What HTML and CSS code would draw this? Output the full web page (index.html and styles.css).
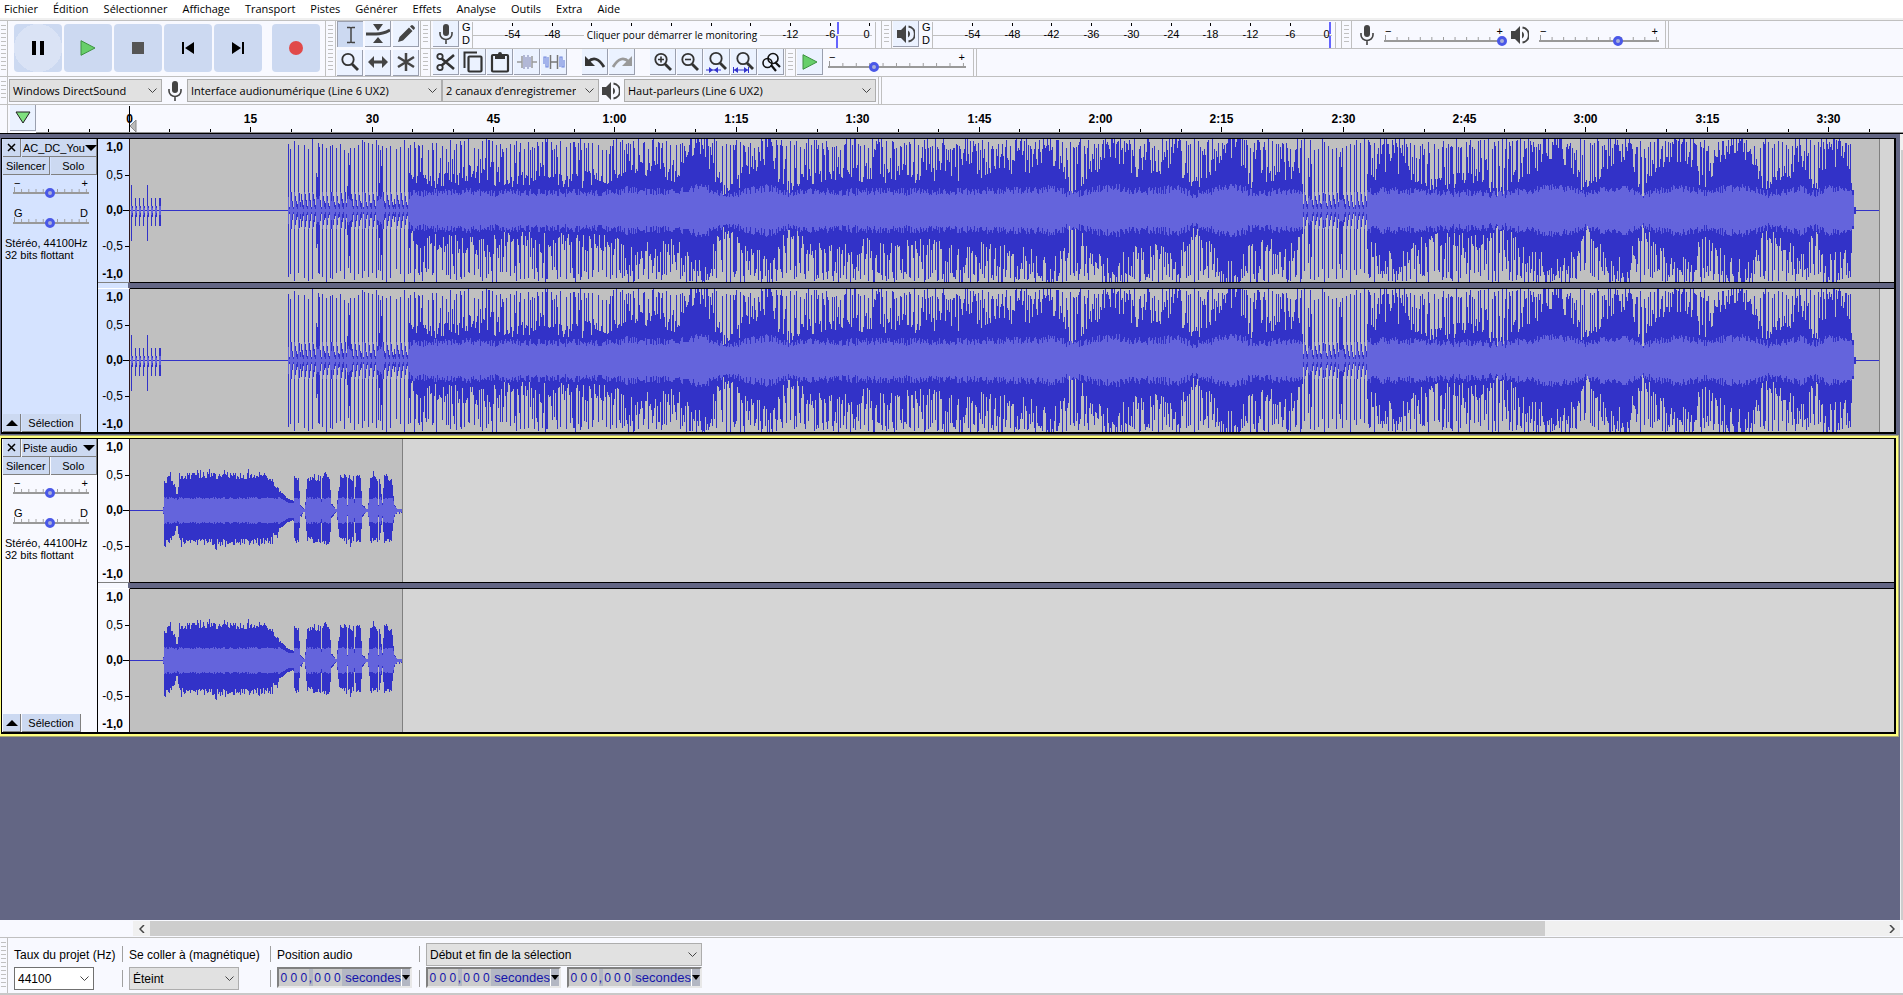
FILE: index.html
```
<!DOCTYPE html>
<html lang="fr">
<head>
  <meta charset="UTF-8" />
  <title>Audacity</title>
  <link rel="stylesheet" href="styles.css">
</head>
<body>

  <svg class="defs" width="0" height="0" aria-hidden="true">
    <symbol id="i-mic" viewBox="0 0 14 20">
      <rect x="4" y="0" width="6" height="12" rx="3" fill="#444"/>
      <path d="M1 8v2a6 5.500 0 0 0 12 0V8M7 15v5" fill="none" stroke="#444" stroke-width="1.600"/>
    </symbol>
    <symbol id="i-speaker" viewBox="0 0 18 18">
      <path d="M0 5h4l5-5v18l-5-5H0z" fill="#444"/>
      <path d="M11 5.500a4 4 0 0 1 0 7z" fill="#444"/>
      <path d="M11.500 1.500a7.600 7.600 0 0 1 0 15" fill="none" stroke="#444" stroke-width="2"/>
    </symbol>
    <symbol id="i-lens" viewBox="0 0 20 20">
      <circle cx="8" cy="7.500" r="5.700" fill="none" stroke="#333" stroke-width="1.800"/>
      <path d="M12 12l6 6" stroke="#333" stroke-width="2.800"/>
    </symbol>
    <symbol id="i-play" viewBox="0 0 16 16">
      <path d="M1 .7L15 8 1 15.300z" fill="#67cf6a" stroke="#3d9140"/>
    </symbol>
  </svg>

  <nav class="menu">
    <a href="#">Fichier</a>
    <a href="#">Édition</a>
    <a href="#">Sélectionner</a>
    <a href="#">Affichage</a>
    <a href="#">Transport</a>
    <a href="#">Pistes</a>
    <a href="#">Générer</a>
    <a href="#">Effets</a>
    <a href="#">Analyse</a>
    <a href="#">Outils</a>
    <a href="#">Extra</a>
    <a href="#">Aide</a>
  </nav>

  <div class="dock">
    <div class="grab first"></div>
    <div class="transport">
      <button class="hover" aria-label="Pause"><svg width="14" height="14"><path d="M1 0h4v14H1zM9 0h4v14H9z"/></svg></button>
      <button aria-label="Lecture"><svg width="16" height="16"><use href="#i-play"/></svg></button>
      <button aria-label="Arrêter"><svg width="14" height="14"><path d="M1 1h12v12H1z" fill="#555"/></svg></button>
      <button aria-label="Début"><svg width="14" height="14"><path d="M1 1h2v12H1zM13 1v12L4 7z"/></svg></button>
      <button aria-label="Fin"><svg width="14" height="14"><path d="M11 1h2v12h-2zM1 1v12l9-6z"/></svg></button>
      <button class="record" aria-label="Enregistrer"><svg width="14" height="14"><circle cx="7" cy="7" r="7" fill="#e14a4a"/></svg></button>
    </div>
    <div class="grab"></div>
    <div class="tools">
      <button class="tb down" aria-label="Outil de sélection"><svg width="20" height="20"><path d="M6 2.500h3q1 0 1 1 0-1 1-1h3M6 17.500h3q1 0 1-1 0 1 1 1h3M10 3v14" fill="none" stroke="#444" stroke-width="1.500"/></svg></button>
      <button class="tb" aria-label="Outil de niveau"><svg width="24" height="20"><path d="M7 0h10l-5 7zM7 19h10l-5-6z" fill="#444"/><path d="M0 10h10q7 0 14-4" fill="none" stroke="#444" stroke-width="3"/></svg></button>
      <button class="tb" aria-label="Outil de retouche"><svg width="20" height="20"><path d="M2 18l1.500-5L13 3.500 16.500 7 7 16.500zM14 2.500l1-1q1-1 2 0L18.500 3q1 1 0 2l-1 1z" fill="#444"/></svg></button>
      <button class="tb" aria-label="Outil de zoom"><svg width="20" height="20"><use href="#i-lens"/></svg></button>
      <button class="tb" aria-label="Outil de glissement"><svg width="20" height="14"><path d="M0 7l6-6v4.500h8V1l6 6-6 6V8.500H6V13z" fill="#444"/></svg></button>
      <button class="tb" aria-label="Multi-outils"><svg width="20" height="20"><path d="M10 1v18M2 5l16 10M18 5L2 15" stroke="#444" stroke-width="2.500"/></svg></button>
    </div>

    <div class="bars">
      <div class="bar">
        <div class="grab"></div>
        <button class="tb" aria-label="Niveau d'enregistrement"><svg width="14" height="20"><use href="#i-mic"/></svg></button>
        <div class="gd"><span>G</span><span>D</span></div>
        <svg class="meter" data-peak="365,364" data-note="Cliquer pour démarrer le monitoring"></svg>
        <div class="grab"></div>
        <button class="tb" aria-label="Niveau de lecture"><svg width="18" height="18"><use href="#i-speaker"/></svg></button>
        <div class="gd"><span>G</span><span>D</span></div>
        <svg class="meter" data-peak="397,397"></svg>
        <div class="grab"></div>
        <div class="mixer">
          <svg width="14" height="20"><use href="#i-mic"/></svg>
          <div class="slider"><div class="ends"><span>−</span><span>+</span></div><input type="range" aria-label="Volume d'enregistrement" min="0" max="100" value="99"></div>
          <svg width="18" height="18"><use href="#i-speaker"/></svg>
          <div class="slider"><div class="ends"><span>−</span><span>+</span></div><input type="range" aria-label="Volume de lecture" min="0" max="100" value="66"></div>
        </div>
        <div class="end"></div>
      </div>

      <div class="bar">
        <div class="grab"></div>
        <div class="group">
          <button class="tb" aria-label="Couper"><svg width="20" height="20"><path d="M5 6l13 11M5 14L18 3" stroke="#333" stroke-width="2.600"/><circle cx="4" cy="4.500" r="2.700" fill="#ebf2ff" stroke="#333" stroke-width="1.800"/><circle cx="4" cy="15.500" r="2.700" fill="#ebf2ff" stroke="#333" stroke-width="1.800"/></svg></button>
          <button class="tb" aria-label="Copier"><svg width="20" height="22"><path d="M1.500 17V1.500H14" fill="none" stroke="#333" stroke-width="2"/><rect x="5.500" y="5.500" width="13" height="15" rx="1" fill="none" stroke="#333" stroke-width="2.200"/></svg></button>
          <button class="tb" aria-label="Coller"><svg width="20" height="22"><rect x="2" y="4" width="16" height="16.500" rx="1" fill="none" stroke="#333" stroke-width="2.200"/><path d="M5 3h3q0-2 2-2t2 2h3v5H5z" fill="#333"/></svg></button>
          <button class="tb" aria-label="Rogner"><svg width="20" height="16"><path d="M0 8h5M15 8h5M5 2v12M15 2v12" stroke="#999" stroke-width="1.500"/><path d="M7 1v14M9 3v10M11 1v14M13 3v10" stroke="#8b90bb" stroke-width="1.200"/></svg></button>
          <button class="tb" aria-label="Silence"><svg width="22" height="16"><path d="M7 8h8M7.500 1v14M14.500 1v14" stroke="#777" stroke-width="1.500"/><path d="M1 10V3h2v10h2V3M17 13V3h2v10h2V6" fill="none" stroke="#7288dd" stroke-width="1.200"/></svg></button>
        </div>
        <div class="group">
          <button class="tb" aria-label="Annuler"><svg width="22" height="14"><path d="M4 7q8-8 16 5" fill="none" stroke="#333" stroke-width="2.800"/><path d="M1 1v10h10z" fill="#333"/></svg></button>
          <button class="tb" aria-label="Refaire"><svg width="22" height="14"><path d="M18 7Q10-1 2 12" fill="none" stroke="#999" stroke-width="2.800"/><path d="M21 1v10H11z" fill="#999"/></svg></button>
        </div>
        <div class="group">
          <button class="tb" aria-label="Zoom avant"><svg width="20" height="20"><use href="#i-lens"/><path d="M5 7.500h6M8 4.500v6" stroke="#333" stroke-width="1.600"/></svg></button>
          <button class="tb" aria-label="Zoom arrière"><svg width="20" height="20"><use href="#i-lens"/><path d="M5 7.500h6" stroke="#333" stroke-width="1.600"/></svg></button>
          <button class="tb" aria-label="Zoom sur la sélection"><svg width="22" height="22"><use href="#i-lens" x="2" y="0" width="20" height="20"/><path d="M0 19h15" stroke="#33c"/><path d="M7 19l-4-3v6zM8 19l4-3v6z" fill="#33c"/></svg></button>
          <button class="tb" aria-label="Ajuster le projet"><svg width="22" height="22"><use href="#i-lens" x="2" y="0" width="20" height="20"/><path d="M1 19h14M.5 16v6M15.500 16v6" stroke="#33c"/><path d="M1 19l4-3v6zM15 19l-4-3v6z" fill="#33c"/></svg></button>
          <button class="tb" aria-label="Basculer le zoom"><svg width="20" height="20"><circle cx="6.500" cy="11" r="4.500" fill="none" stroke="#111" stroke-width="1.600"/><circle cx="12" cy="6.500" r="5" fill="none" stroke="#111" stroke-width="1.600"/><path d="M10 13l5 6M14 10l5 5" stroke="#111" stroke-width="2.200"/></svg></button>
        </div>
        <div class="grab"></div>
        <button class="tb" aria-label="Lecture à vitesse"><svg width="16" height="18"><use href="#i-play"/></svg></button>
        <div class="slider speed"><div class="ends"><span>−</span><span>+</span></div><input type="range" aria-label="Vitesse de lecture" min="0" max="100" value="33"></div>
        <div class="end"></div>
      </div>
    </div>
  </div>

  <div class="devices">
    <div class="grab first"></div>
    <select class="host" aria-label="Hôte audio"><option>Windows DirectSound</option></select>
    <svg width="14" height="20"><use href="#i-mic"/></svg>
    <select class="input" aria-label="Périphérique d'enregistrement"><option>Interface audionumérique (Line 6 UX2)</option></select>
    <select class="channels" aria-label="Canaux"><option>2 canaux d’enregistrement (stéréo)</option></select>
    <svg width="18" height="18"><use href="#i-speaker"/></svg>
    <select class="output" aria-label="Périphérique de lecture"><option>Haut-parleurs (Line 6 UX2)</option></select>
    <div class="end"></div>
  </div>

  <div class="timeline">
    <div class="grab first plain"></div>
    <button class="tb pin" aria-label="Tête de lecture"><svg width="16" height="13"><path d="M1 1h14L8 12z" fill="#7fe07f" stroke="#222"/></svg></button>
    <svg id="ruler"></svg>
  </div>

  <main class="workspace">
    <div class="tracks">
      <section class="track selected" data-clip="1749" data-kind="song">
        <div class="panel">
          <div class="row title"><button aria-label="Fermer"><svg width="9" height="9"><path d="M1 1l7 7M8 1L1 8" stroke="#000" stroke-width="1.500"/></svg></button><button class="name"><span>AC_DC_You</span><svg width="12" height="6"><path d="M0 0h12L6 6z"/></svg></button></div>
          <div class="row"><button>Silencer</button><button>Solo</button></div>
          <div class="slider"><div class="ends"><span>−</span><span>+</span></div><input type="range" aria-label="Gain" value="49"></div>
          <div class="slider"><div class="ends"><span>G</span><span>D</span></div><input type="range" aria-label="Panoramique" value="49"></div>
          <p>Stéréo, 44100Hz<br>32 bits flottant</p>
          <div class="row foot"><button aria-label="Réduire"><svg width="12" height="6"><path d="M0 6h12L6 0z"/></svg></button><button>Sélection</button></div>
        </div>
        <div class="channels-view">
          <div class="channel"><svg class="vruler"></svg><svg class="wave"></svg></div>
          <div class="channel"><svg class="vruler"></svg><svg class="wave"></svg></div>
        </div>
      </section>

      <section class="track focused" data-clip="272" data-kind="guitar">
        <div class="panel">
          <div class="row title"><button aria-label="Fermer"><svg width="9" height="9"><path d="M1 1l7 7M8 1L1 8" stroke="#000" stroke-width="1.500"/></svg></button><button class="name"><span>Piste audio</span><svg width="12" height="6"><path d="M0 0h12L6 6z"/></svg></button></div>
          <div class="row"><button>Silencer</button><button>Solo</button></div>
          <div class="slider"><div class="ends"><span>−</span><span>+</span></div><input type="range" aria-label="Gain" value="49"></div>
          <div class="slider"><div class="ends"><span>G</span><span>D</span></div><input type="range" aria-label="Panoramique" value="49"></div>
          <p>Stéréo, 44100Hz<br>32 bits flottant</p>
          <div class="row foot"><button aria-label="Réduire"><svg width="12" height="6"><path d="M0 6h12L6 0z"/></svg></button><button>Sélection</button></div>
        </div>
        <div class="channels-view">
          <div class="channel"><svg class="vruler"></svg><svg class="wave"></svg></div>
          <div class="channel"><svg class="vruler"></svg><svg class="wave"></svg></div>
        </div>
      </section>
    </div>
    <div class="vscroll"><div></div></div>
  </main>

  <div class="hscroll">
    <button aria-label="Défiler à gauche"><svg width="6" height="8"><path d="M5 0L1 4l4 4" fill="none" stroke="#444" stroke-width="1.500"/></svg></button>
    <div class="rail"><div class="thumb"></div></div>
    <button aria-label="Défiler à droite"><svg width="6" height="8"><path d="M1 0l4 4-4 4" fill="none" stroke="#444" stroke-width="1.500"/></svg></button>
  </div>

  <footer class="selection">
    <div class="grab first"></div>
    <div class="field rate">
      <label for="rate">Taux du projet (Hz)</label>
      <select id="rate"><option>44100</option></select>
    </div>
    <div class="sep"></div>
    <div class="field snap">
      <label for="snap">Se coller à (magnétique)</label>
      <select id="snap"><option>Éteint</option></select>
    </div>
    <div class="sep"></div>
    <div class="field">
      <span class="label">Position audio</span>
      <div class="time"></div>
    </div>
    <div class="sep"></div>
    <div class="field">
      <select aria-label="Type de sélection"><option>Début et fin de la sélection</option></select>
      <div class="pair"><div class="time"></div><div class="time"></div></div>
    </div>
  </footer>

  <script>
    const line = (x1, y1, x2, y2, color) =>
      `<path d="M${x1} ${y1}L${x2} ${y2}" stroke="${color}"/>`;

    // Timeline: 15 seconds every 364/3 pixels
    const ruler = document.getElementById("ruler");
    let marks = "";
    for (let i = -2; i < 45; i++) {
      const x = Math.round(93 + i * 364.1 / 9) + 0.5;
      const big = i % 3 === 0 && i >= 0;
      marks += line(x, big ? 22 : 24, x, 27, "#000");
      if (big) {
        const s = i * 5;
        const label = s < 60 ? s : Math.floor(s / 60) + ":" + String(s % 60).padStart(2, "0");
        marks += `<text x="${x}" y="18" text-anchor="middle">${label}</text>`;
      }
    }
    marks += line(93.5, 1, 93.5, 27, "#000") + '<path d="M94 21l6-6v12z" fill="#bbb" stroke="#888"/>';
    ruler.innerHTML = marks;

    // Level meters
    document.querySelectorAll(".meter").forEach(meter => {
      const note = meter.dataset.note;
      let out = line(0.5, 1, 0.5, 27, "#c0c0c0") + line(0, 14.5, 400, 14.5, "#c0c0c0") + line(403.5, 1, 403.5, 27, "#c0c0c0");
      for (let i = 0; i < 10; i++) {
        const x = Math.round(40 + i * 39.7) + 0.5;
        out += line(x, 2, x, 5, "#000");
        // the note takes the place of the middle labels
        if (note && i > 1 && i < 7) continue;
        out += `<text x="${i === 9 ? x - 3 : x}" y="17" text-anchor="middle">${i * 6 - 54}</text>`;
      }
      const [l, r] = meter.dataset.peak.split(",");
      out += `<path d="M${l} 1h2v12h-2zM${r} 15h2v12h-2z" fill="#6464ff"/>`;
      if (note) {
        out += `<rect x="112" y="6" width="176" height="16" fill="#f8f9ff"/><text class="note" x="200" y="18" text-anchor="middle">${note}</text>`;
      }
      meter.innerHTML = out;
    });

    // Amplitude rulers
    document.querySelectorAll(".vruler").forEach(v => {
      const rows = [["1,0", 8, 1], ["0,5", 36, 0], ["0,0", 71, 1], ["-0,5", 107, 0], ["-1,0", 135, 1]];
      v.innerHTML = rows.map(([t, y, bold], i) =>
        `<text x="25" y="${y + 4}" text-anchor="end"${bold ? ' class="bold"' : ""}>${t}</text>` +
        (i > 0 && i < 4 ? line(i === 2 ? 25 : 27, y + 0.5, 31, y + 0.5, "#000") : "")
      ).join("");
    });

    // Waveforms: [x, peak] key points in pixels, joined by straight lines
    const song = [[158, 12], [278, 14], [281, 27], [350, 34], [370, 28], [490, 30], [497, 52], [510, 40], [545, 34], [556, 50],
      [570, 64], [580, 48], [592, 17], [605, 24], [620, 42], [640, 64], [648, 34], [660, 20], [680, 34], [780, 36], [840, 38], [890, 46],
      [910, 50], [920, 64], [930, 42], [940, 16], [950, 26], [968, 50], [985, 64], [1005, 38], [1030, 45], [1045, 58],
      [1060, 22], [1070, 22], [1090, 58], [1108, 66], [1120, 28], [1165, 40], [1175, 12], [1230, 10], [1237, 32], [1270, 48],
      [1300, 26], [1350, 30], [1370, 16], [1395, 42], [1425, 64], [1440, 54], [1455, 16], [1468, 38], [1480, 52], [1497, 62],
      [1512, 14], [1525, 38], [1545, 62], [1562, 48], [1572, 26], [1585, 42], [1605, 64], [1622, 54], [1635, 20], [1655, 36],
      [1670, 54], [1685, 22], [1697, 56], [1715, 52], [1723, 28]];
    const guitar = [[33, 4], [34, 30], [39, 34], [44, 27], [47, 17], [49, 33], [60, 36], [140, 35], [146, 24], [152, 18],
      [158, 12], [163, 11], [164, 35], [168, 33], [170, 6], [174, 1], [175, 8], [177, 33], [190, 34], [191, 13], [192, 36],
      [199, 35], [201, 8], [206, 1], [208, 20], [210, 34], [216, 35], [217, 6], [218, 35], [223, 34], [224, 12], [226, 34],
      [230, 33], [232, 6], [237, 1], [238, 8], [240, 34], [247, 34], [248, 7], [249, 34], [252, 8], [254, 35], [261, 33],
      [264, 6], [267, 1], [271, 1]];

    let seed = 7;
    function rnd() {
      seed = (seed * 1103515245 + 12345) % 2147483648;
      return seed / 2147483648;
    }

    function envelope(keys, x) {
      for (let i = 1; i < keys.length; i++) {
        const [x0, y0] = keys[i - 1], [x1, y1] = keys[i];
        if (x >= x0 && x <= x1) return y0 + (y1 - y0) * (x - x0) / (x1 - x0);
      }
      return 0;
    }

    function songSample(x) {
      if (x < 31) {
        if (x === 1 || x === 17) return [25, 30, 4];
        return x % 4 === 1 || x === 30 ? [12, 15, 4] : x % 4 === 2 ? [4, 6, 2] : [0, 0, 0];
      }
      if (x < 158 || x > 1725) return [0, 0, 0];
      if (x > 1723) return [3, 3, 0];
      if (x > 1721) return [20, 18, 15];
      const base = envelope(song, x);
      const sparse = x < 280 || (x > 1172 && x < 1237);
      const beat = x % 4 === (x % 31 > 15 ? 2 : 0);
      const after = (x - (x % 31 > 15 ? 2 : 0)) % 4;
      let up = base * (0.75 + rnd() * 0.6), down = base * (0.75 + rnd() * 0.6);
      let rms = 9 + base * 0.15 + rnd() * 8;
      if (sparse) {
        // short decay after each beat, with a fuller hit every 31 pixels
        const full = x % 31 < 4;
        up = down = full ? 22 + rnd() * 45 : [20, 14, 7, 3][after] + rnd() * 4;
        rms = full ? 10 + rnd() * 4 : [18, 9, 3, 1][after];
      }
      if (beat || (!sparse && rnd() < 0.1)) {
        up = Math.max(up, 60 + rnd() * 12);
        down = Math.max(down, 58 + rnd() * 14);
      } else if (!sparse && rnd() < 0.3) {
        up += rnd() * 34;
        down += rnd() * 34;
      }
      return [up, down, rms];
    }

    function guitarSample(x) {
      if (x < 33) return [0, 0, 0];
      const base = envelope(guitar, x);
      const jitter = base > 20 ? 1 : 0.2;
      const up = base - 1 + (rnd() * 7 - 4 + (rnd() < 0.06 ? 5 : 0)) * jitter;
      const down = base * 0.88 + (rnd() * 7 - 4 + (rnd() < 0.08 ? 6 : 0)) * jitter;
      return [up, down, Math.min(base * 0.6, 11 + rnd() * 2)];
    }

    document.querySelectorAll(".track").forEach(track => {
      const clip = Number(track.dataset.clip);
      const sample = track.dataset.kind === "song" ? songSample : guitarSample;
      track.querySelectorAll(".wave").forEach(wave => {
        seed = 7;
        let peaks = "", rms = "";
        for (let x = 0; x < clip; x++) {
          const [up, down, level] = sample(x).map(v => Math.min(71, Math.max(0, Math.round(v))));
          peaks += `M${x} ${71 - up}h1v${up + down + 1}h-1z`;
          if (level > 0) rms += `M${x} ${71 - level}h1v${level * 2 + 1}h-1z`;
        }
        wave.innerHTML = `<rect width="${clip}" height="143" fill="#c0c0c0"/>` +
          `<path d="${peaks}" fill="#3232c8"/><path d="${rms}" fill="#6464dc"/>` +
          `<rect x="${clip}" width="1" height="143" fill="#808080"/>`;
      });
    });

    // Time fields
    document.querySelectorAll(".time").forEach(t => {
      t.innerHTML = "<b>0</b><b>0</b><b>0</b><i>,</i><b>0</b><b>0</b><b>0</b><span>secondes</span>" +
        '<button aria-label="Format"><svg width="8" height="5"><path d="M0 0h8L4 5z"/></svg></button>';
    });
  </script>
</body>
</html>
```
FILE: styles.css
```
* {
  box-sizing: border-box;
}

body {
  margin: 0;
  min-height: 100vh;
  display: flex;
  flex-direction: column;
  background: #f8f9ff;
  color: #000;
  font-family: "Liberation Sans", Arial, sans-serif;
  font-size: 12px;
  overflow: hidden;
}

button {
  display: flex;
  align-items: center;
  justify-content: center;
  flex: none;
  padding: 0;
  border: none;
  font: inherit;
  color: inherit;
}

svg {
  flex: none;
}

.defs {
  position: absolute;
}

/* Menu */

.menu {
  display: flex;
  gap: 15px;
  height: 20px;
  padding: 0 4px;
  background: #fff;
  border-bottom: 2px solid #f0f0f0;
  font-family: "Open Sans", "Noto Sans", sans-serif;
  font-size: 11px;
  line-height: 18px;
}

.menu a {
  color: #000;
  text-decoration: none;
}

/* Toolbars */

.dock {
  display: flex;
  height: 56px;
  border-top: 1px solid #c0c0c0;
}

.grab {
  flex: none;
  width: 11px;
  border: solid #c0c0c0;
  border-width: 0 1px;
  background: repeating-linear-gradient(#c0c0c0 0 1px, transparent 1px 4px) center / 5px calc(100% - 8px) no-repeat;
}

.grab.first {
  width: 8px;
  border-left: none;
}

.grab.plain {
  background: none;
}

.end {
  width: 4px;
  border: solid #c0c0c0;
  border-width: 0 1px;
}

.transport {
  display: flex;
  gap: 2px;
  padding: 3px 5px 4px 6px;
}

.transport button {
  width: 48px;
  height: 48px;
  border-radius: 4px;
  background: #ccd9f1;
}

.transport .hover {
  background: radial-gradient(circle, #dae3f5 24px, #ccd9f1 24px);
}

.transport .record {
  margin-left: 8px;
}

.tools {
  display: grid;
  grid-template-columns: repeat(3, 26px);
  gap: 2px;
  padding: 0 1px;
}

.tb {
  width: 26px;
  height: 26px;
  background: #ebf2ff;
  border: solid #9a9fae;
  border-width: 0 1px 1px 0;
}

.tb.down {
  background: #ccd9f1;
  border-width: 1px 0 0 1px;
}

.bars {
  flex: 1;
}

.bar {
  display: flex;
  height: 28px;
  border-bottom: 1px solid #c0c0c0;
}

.bar .tb {
  margin-left: 1px;
}

.bar > .grab:first-child {
  margin-right: 1px;
}

.group {
  display: flex;
  margin-right: 14px;
}

.group:nth-of-type(4) {
  margin-right: 1px;
}

.gd {
  display: flex;
  flex-direction: column;
  width: 10px;
  margin-left: 3px;
  font-size: 11px;
  line-height: 13px;
}

.meter {
  width: 405px;
  height: 27px;
  margin-right: 4px;
  font-size: 11px;
}

.note {
  font-family: "Open Sans", "Noto Sans", sans-serif;
  font-size: 10px;
}

.mixer {
  display: flex;
  align-items: center;
  padding: 0 6px 0 8px;
}

.mixer .slider {
  width: 120px;
  margin: 0 7px 0 10px;
}

.mixer .slider:last-child {
  margin-right: 0;
}

/* Sliders: end labels over a track with eleven ticks */

.slider {
  padding: 0 1px;
  background:
    linear-gradient(#999, #999) 0 100% / 100% 2px no-repeat,
    linear-gradient(90deg, #999 1px, transparent 1px) 1px calc(100% - 2px) / 100% 5px no-repeat,
    linear-gradient(90deg, #999 1px, transparent 1px) 1px calc(100% - 2px) / calc((100% - 4px) / 10) 3px repeat-x;
  height: 15px;
}

.ends {
  display: flex;
  justify-content: space-between;
  height: 10px;
  line-height: 8px;
  font-size: 11px;
}

.slider input {
  display: block;
  appearance: none;
  width: calc(100% + 10px);
  height: 10px;
  margin: -1px -5px 0;
  background: none;
}

.slider input::-webkit-slider-thumb {
  appearance: none;
  width: 10px;
  height: 10px;
  border: 3px solid #4a58e8;
  border-radius: 5px;
  background: #aab0d8;
}

.speed {
  width: 138px;
  margin: 4px 7px 0 5px;
}

/* Drop-downs */

select {
  appearance: none;
  height: 23px;
  padding: 0 22px 0 3px;
  border: 1px solid #adadad;
  border-radius: 0;
  background: #e1e1e1 url("data:image/svg+xml,%3Csvg xmlns='http://www.w3.org/2000/svg' width='9' height='6'%3E%3Cpath d='M.5 .5l4 4 4-4' fill='none' stroke='%23444'/%3E%3C/svg%3E") no-repeat right 4px center;
  color: #000;
  font: inherit;
}

.devices {
  display: flex;
  align-items: center;
  height: 28px;
  border-top: 1px solid #c0c0c0;
  font-family: "Open Sans", "Noto Sans", sans-serif;
  font-size: 11px;
}

.devices .grab,
.devices .end {
  align-self: stretch;
}

.devices .end {
  margin-left: 2px;
}

.devices svg {
  margin: 0 5px 0 6px;
}

.devices svg:nth-of-type(2) {
  margin: 0 4px 0 3px;
}

.host {
  width: 153px;
  margin-left: 1px;
}

.input {
  width: 255px;
}

.channels {
  width: 157px;
}

.output {
  width: 252px;
}

/* Timeline */

.timeline {
  display: flex;
  height: 30px;
  border-top: 1px solid #c0c0c0;
  border-bottom: 1px solid #000;
}

.pin {
  margin: 0 0 0 2px;
}

#ruler {
  flex: 1;
  height: 28px;
  border-bottom: 1px solid #909090;
  font-size: 12px;
  font-weight: bold;
}

/* Tracks */

.workspace {
  flex: 1;
  display: flex;
  background: #636684;
}

.tracks {
  flex: 1;
  min-width: 0;
  padding: 4px 4px 0 1px;
}

.track {
  display: flex;
  margin-bottom: 4px;
  border: solid #000;
  border-width: 1px 2px 2px 1px;
  --face: #f8f9ff;
}

.selected {
  --face: #d5e3ff;
}

.focused {
  box-shadow: 0 0 0 2px #ffff80, 0 0 0 3px #a9a974;
}

.panel {
  display: flex;
  flex-direction: column;
  width: 96px;
  background: var(--face);
  border-right: 1px solid #000;
  font-size: 11px;
}

.row {
  display: flex;
  gap: 1px;
  height: 18px;
  padding-left: 1px;
}

.row button {
  flex: 1;
  background: #ccd9f1;
  border: solid #808080;
  border-width: 0 1px 1px 0;
}

.row button:first-child:has(svg) {
  flex: 0 0 18px;
}

.row .name {
  justify-content: space-between;
  min-width: 0;
  padding: 0 1px;
}

.panel .slider {
  width: 76px;
  margin: 4px 0 0 11px;
}

.panel .slider + .slider {
  margin-top: 15px;
}

.panel p {
  margin: 13px 0 0 3px;
  line-height: 12px;
}

.foot {
  margin-top: auto;
}

.foot button:last-child {
  flex: 0 0 59px;
}

.channels-view {
  flex: 1;
  min-width: 0;
  display: flex;
  flex-direction: column;
  gap: 5px;
  background: linear-gradient(90deg, var(--face) 30px, transparent 30px);
}

.channel {
  display: flex;
  height: 144px;
}

.channel:first-child .wave {
  border-bottom: 1px solid #000;
}

.channel:first-child .vruler {
  border-bottom: 1px solid #808080;
}

.channel:last-child .wave {
  border-top: 1px solid #000;
}

.channel:last-child .vruler {
  border-top: 1px solid #fff;
}

.vruler {
  width: 32px;
  height: 144px;
  background: var(--face);
  border-right: 1px solid #301818;
  font-size: 12px;
}

.bold {
  font-weight: bold;
}

.wave {
  flex: 1;
  min-width: 0;
  height: 144px;
  background: #d5d5d5;
  shape-rendering: crispEdges;
}

.vscroll {
  width: 3px;
  padding: 16px 0 0 1px;
  background: #f0f0f0;
}

.vscroll div {
  height: 100%;
  background: #cdcdcd;
}

.hscroll {
  display: flex;
  height: 17px;
  padding: 1px 3px 1px 133px;
}

.hscroll button {
  width: 17px;
  background: #f0f0f0;
}

.rail {
  flex: 1;
  background: #f0f0f0;
}

.thumb {
  width: 80.5%;
  height: 100%;
  background: #cdcdcd;
}

/* Selection bar */

.selection {
  display: flex;
  gap: 6px;
  height: 58px;
  border-top: 1px solid #c0c0c0;
  border-bottom: 2px solid #c8c8c8;
}

.field {
  display: flex;
  flex-direction: column;
  min-width: 136px;
  padding-top: 5px;
}

.field label,
.field .label {
  height: 24px;
  line-height: 25px;
  white-space: nowrap;
}

.field > select:first-child {
  margin-bottom: 1px;
}

.rate {
  min-width: 102px;
}

.rate select {
  width: 80px;
  background-color: #fff;
  border-color: #707070;
}

.snap {
  min-width: 135px;
}

.snap select {
  width: 110px;
}

.sep {
  width: 1px;
  margin: 8px 0 6px;
  background: linear-gradient(#a0a0a0 16px, transparent 16px 24px, #a0a0a0 24px);
}

.pair {
  display: flex;
  gap: 6px;
}

.time {
  display: flex;
  align-items: stretch;
  width: 135px;
  height: 21px;
  border: 2px solid;
  border-color: #808080 #e8e8e8 #e8e8e8 #808080;
  background: #b3b7c3;
  color: #1414aa;
  font-size: 12px;
  line-height: 18px;
}

.time b {
  width: 10px;
  background: #ccc;
  font-weight: normal;
  text-align: center;
}

.time i {
  width: 4px;
  font-style: normal;
}

.time span {
  flex: 1;
  padding-left: 3px;
  font-size: 13px;
}

.time button {
  width: 9px;
  background: #b3b7c3;
  border-left: 1px solid #fff;
}
```
